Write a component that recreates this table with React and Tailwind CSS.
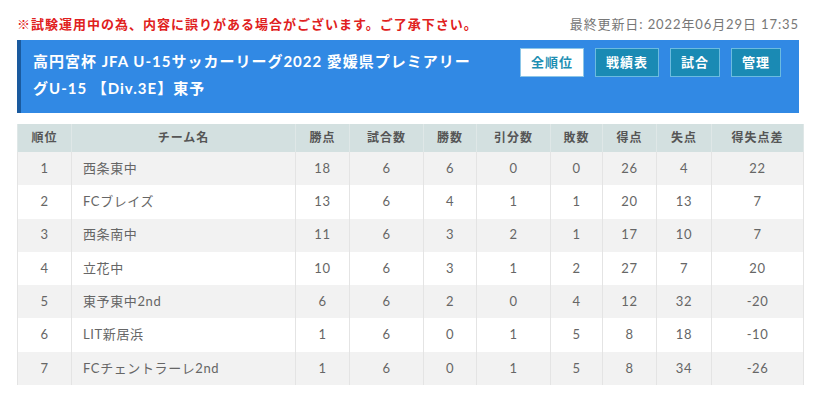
import React from "react";

const rows = [
  [1, "西条東中", 18, 6, 6, 0, 0, 26, 4, 22],
  [2, "FCブレイズ", 13, 6, 4, 1, 1, 20, 13, 7],
  [3, "西条南中", 11, 6, 3, 2, 1, 17, 10, 7],
  [4, "立花中", 10, 6, 3, 1, 2, 27, 7, 20],
  [5, "東予東中2nd", 6, 6, 2, 0, 4, 12, 32, -20],
  [6, "LIT新居浜", 1, 6, 0, 1, 5, 8, 18, -10],
  [7, "FCチェントラーレ2nd", 1, 6, 0, 1, 5, 8, 34, -26],
];

const heads = ["順位", "チーム名", "勝点", "試合数", "勝数", "引分数", "敗数", "得点", "失点", "得失点差"];
const widths = ["w-[54px]", "w-[224px]", "w-[54px]", "w-[74px]", "w-[53px]", "w-[74px]", "w-[52px]", "w-[54px]", "w-[55px]", "w-[92px]"];

export default function App() {
  return (
    <div
      className="w-[816px] h-[400px] bg-white px-[17px] pt-[16px]"
      style={{ fontFamily: 'Lato, "Noto Sans CJK JP", sans-serif' }}
    >
      <div className="flex justify-between items-center h-[18px]">
        <span className="text-[13px] font-bold text-[#e02020] tracking-[1px]">
          ※試験運用中の為、内容に誤りがある場合がございます。ご了承下さい。
        </span>
        <span className="text-[13px] text-[#777] tracking-[0.9px]">最終更新日: 2022年06月29日 17:35</span>
      </div>
      <div className="mt-[6px] flex bg-[#3189e4] border-l-[4px] border-[#1a5a9e] h-[73px] pl-[12px] pr-[18px]">
        <div className="w-[448px] pt-[8px] text-white font-bold text-[15px] tracking-[1px] leading-[27px]">
          高円宮杯 JFA U-15サッカーリーグ2022 愛媛県プレミアリーグU-15 【Div.3E】東予
        </div>
        <div className="ml-auto flex gap-[11px] pt-[8px] text-[13px] font-bold tracking-[1px]">
          <div className="h-[29px] w-[64px] flex items-center justify-center bg-white text-[#1e8fb3] border border-[#8cc6e8]">全順位</div>
          <div className="h-[29px] w-[64px] flex items-center justify-center bg-[#1a8ab4] text-white border border-[#6bbbe0]">戦績表</div>
          <div className="h-[29px] w-[50px] flex items-center justify-center bg-[#1a8ab4] text-white border border-[#6bbbe0]">試合</div>
          <div className="h-[29px] w-[50px] flex items-center justify-center bg-[#1a8ab4] text-white border border-[#6bbbe0]">管理</div>
        </div>
      </div>
      <table className="mt-[11px] w-[786px] table-fixed border-collapse text-[13px]">
        <thead>
          <tr className="bg-[#d3e0e0] h-[28px]">
            {heads.map((h, i) => (
              <th key={i} className={`${widths[i]} font-bold text-[#555] text-[12px] tracking-[1px] text-center border-x border-[#dfe7e7]`}>{h}</th>
            ))}
          </tr>
        </thead>
        <tbody>
          {rows.map((r, ri) => (
            <tr key={ri} className={`h-[33.3px] ${ri % 2 === 0 ? "bg-[#f2f2f2]" : "bg-white"}`}>
              {r.map((c, ci) => (
                <td
                  key={ci}
                  className={`text-[#666] tracking-[0.6px] border-x border-[#e4e4e4] ${ci === 1 ? "text-left pl-[11px]" : "text-center"}`}
                >
                  {c}
                </td>
              ))}
            </tr>
          ))}
        </tbody>
      </table>
    </div>
  );
}
